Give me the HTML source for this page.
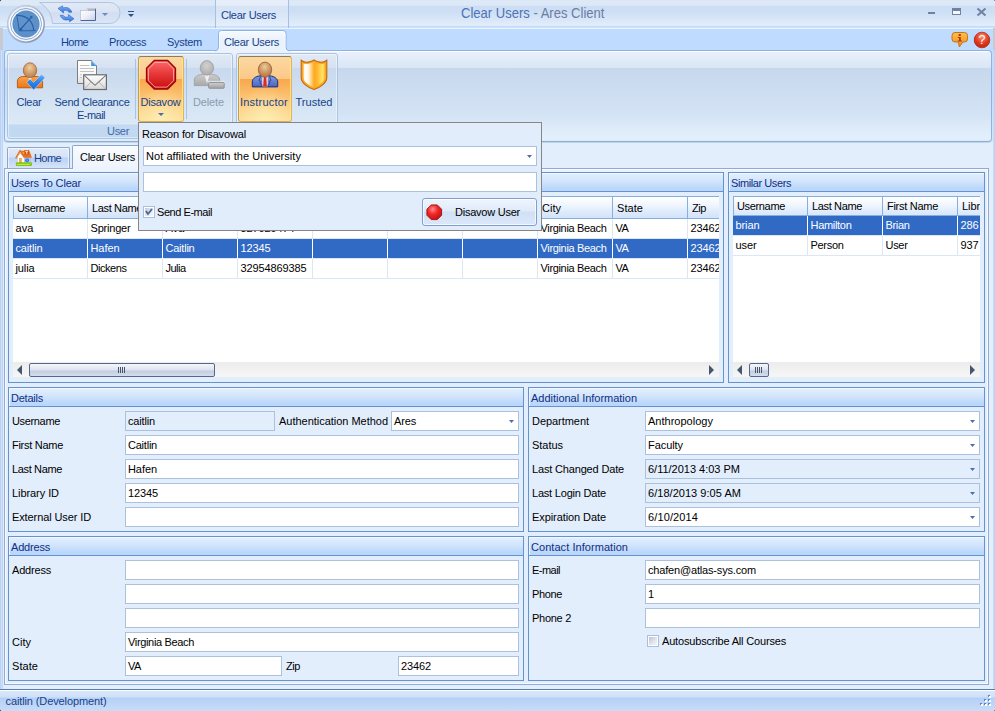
<!DOCTYPE html>
<html><head>
<meta charset="utf-8">
<title>Clear Users - Ares Client</title>
<style>
*{box-sizing:border-box;margin:0;padding:0}
html,body{width:995px;height:711px;overflow:hidden}
body{position:relative;background:#e3eefc;font-family:"Liberation Sans",sans-serif;font-size:11px;letter-spacing:-0.2px;color:#000;line-height:13px}
.a{position:absolute}
.t{position:absolute;white-space:nowrap;height:13px;line-height:13px}
/* title bar */
#title{left:0;top:0;width:995px;height:29px;background:linear-gradient(#dde8f6 0,#dfeaf8 3px,#d9e6f6 6px,#cbddf4 6px,#cedff5 12px,#d9e7f8 20px,#e3eefb 26px,#cfe4fb 26px,#b3d3f8 27px,#b3d3f8 27px,#e9f1fb 28px,#eef3fb 29px)}
#tabrow{left:0;top:29px;width:995px;height:113px;background:linear-gradient(#bfdbff 0,#bfdbff 60px,#d4e5fb 112px)}
#titletext{left:461px;top:5px;font-size:14.600px;letter-spacing:0;color:#6a7da3;height:16px;line-height:16px;transform-origin:0 0;transform:scaleX(.893)}
.rt{color:#15428b;top:36px}
/* ribbon */
#ribbon{left:4px;top:50px;width:988px;height:92px;border:1px solid #8db2e3;border-bottom-color:#93abcf;border-radius:4px;background:linear-gradient(#ffffff 0,#ffffff 1px,#e9f1fb 1px,#d9e6f5 17px,#c7d8ed 17px,#d3e3f4 62px,#e4f0fd 88px,#d3f0fa 89px,#d3f0fa 90px);box-shadow:0 1px 0 rgba(160,178,210,.45)}
.grp{top:53px;height:86px;border:1px solid #abc4e3;border-radius:3px;background:linear-gradient(#e1eaf6 0,#d5e1f1 14px,#c8d9ee 14px,#d5e4f3 50px,#dbe9f7 70px,#c2d9f1 71px,#c1d8f0 84px)}
.grp:after{content:"";position:absolute;left:0;right:0;top:0;bottom:0;border:1px solid rgba(255,255,255,.45);border-radius:2px}
.cap{color:#3e6aaa;top:125px}
.btnlbl{color:#15428b;text-align:center}
.hot{border:1px solid;border-color:#8f7b55 #e3b35a #d6ae60 #c39a57;border-radius:3px;background:radial-gradient(ellipse 30px 34px at 50% 100%,rgba(255,243,185,.75),rgba(255,243,185,0) 100%),linear-gradient(#fad9a3 0,#fbd49a 6px,#fbc987 22px,#f9a74c 22px,#fab661 32px,#fbc87c 44px,#fcd690 56px,#fddd9a 64px);box-shadow:inset 1px 0 0 rgba(255,232,150,.8),inset -1px 0 0 rgba(255,232,150,.8)}
/* popup */
#popup{left:138px;top:122px;width:404px;height:109px;background:#e2edfb;border:1px solid #868686}
.fld{position:absolute;height:20px;border:1px solid #abc1de;background:#fff;padding-left:2px;line-height:19px;white-space:nowrap;overflow:hidden}
.fld.dis{background:#e3eefc}
.arr{position:absolute;right:4px;top:8px;width:5px;height:3px;background:#4d6fa8;clip-path:polygon(0 0,100% 0,50% 100%)}
/* groups */
.gc{position:absolute;border:1px solid #6593cf;background:#e3eefc}
.gh{box-shadow:inset 1px 0 0 #eef5ff;position:absolute;left:0;right:0;top:0;height:19px;border-bottom:1px solid #6593cf;background:linear-gradient(#e1eefd 0,#d3e5fc 7px,#b9d6fb 15px,#bad7fb 18px);color:#0e2f82;padding-left:2px;line-height:18px;white-space:nowrap;border-top:1px solid #f2f8ff}
.lb{position:absolute;white-space:nowrap;line-height:13px;margin-top:1px}
/* grid */
.hd{position:absolute;top:0;height:22px;border-right:1px solid #88aee0;border-bottom:1px solid #88aee0;border-top:1px solid #88aee0;background:linear-gradient(#ffffff 0,#f0f6fe 8px,#dbe9fb 16px,#d2e3f9 21px);padding-left:4px;white-space:nowrap;overflow:hidden}
.row{position:absolute;left:0;height:20px;border-bottom:1px solid #dce7f5}
.row.sel{background:#316ac5;color:#fff}
.c{position:absolute;top:0;height:20px;line-height:19px;padding-left:2.500px;border-right:1px solid #dce7f5;white-space:nowrap;overflow:hidden}
.sel .c{border-right-color:#fff}
.sb{position:absolute;left:0;height:15px;background:linear-gradient(#ececec,#f6f6f6)}
.thumb{position:absolute;top:1px;height:14px;border:1px solid #55678b;border-radius:2px;background:linear-gradient(#f4f7fc 0,#dde4f0 6px,#c3cde0 7px,#d6deec 12px)}
</style>
</head>
<body>
<!-- TITLE BAR -->
<div class="a" id="title"></div>
<div class="a" id="tabrow"></div>
<div class="t" id="titletext"><span style="color:#4d72b3">Clear Users</span> - Ares Client</div>
<!-- window side borders -->
<div class="a" style="left:0;top:28px;width:3px;height:22px;background:#c9cad1"></div>
<div class="a" style="left:993px;top:28px;width:2px;height:22px;background:#c9cad1"></div>
<div class="a" style="left:0;top:50px;width:3px;height:639px;background:linear-gradient(90deg,#aecbf2,#cfe0f8 50%,#b4cff3)"></div>
<div class="a" style="left:993px;top:50px;width:2px;height:639px;background:linear-gradient(90deg,#cfe0f8,#b4cff3)"></div>

<!-- context tab header in title -->
<div class="a" style="left:215px;top:0;width:74px;height:28px;border-left:1px solid #a9bfdf;border-right:1px solid #a9bfdf;background:linear-gradient(rgba(255,255,255,.25),rgba(255,255,255,.1))"></div>
<div class="t" style="left: 221px; top: 9px; color: rgb(21, 66, 139); letter-spacing: -0.28px;">Clear Users</div>

<!-- quick access pill -->
<svg class="a" style="left:38px;top:0" width="86" height="27" viewBox="0 0 86 27">
 <defs><linearGradient id="pg" x1="0" y1="0" x2="0" y2="1"><stop offset="0" stop-color="#e2eaf7"></stop><stop offset=".45" stop-color="#d9e3f3"></stop><stop offset=".5" stop-color="#d1ddf1"></stop><stop offset="1" stop-color="#dbe6f7"></stop></linearGradient></defs>
 <path d="M1.500 2.500 H71.500 A10.500 10.500 0 0 1 71.500 23.500 H14.500 A26 26 0 0 0 1.500 2.500Z" fill="url(#pg)" stroke="#b3c4e2" stroke-width="1"></path>
</svg>
<!-- orb -->
<svg class="a" style="left:6px;top:4px" width="40" height="40" viewBox="0 0 40 40">
 <defs><radialGradient id="og" cx="50%" cy="45%" r="60%"><stop offset="0" stop-color="#6496cc"></stop><stop offset="1" stop-color="#5a8cc6"></stop></radialGradient>
 <linearGradient id="ors" x1="0" y1="0" x2="1" y2="1"><stop offset="0" stop-color="#cfd8e6"></stop><stop offset=".5" stop-color="#a9b6cc"></stop><stop offset="1" stop-color="#76869f"></stop></linearGradient>
 <linearGradient id="orr" x1="0" y1="0" x2="0" y2="1"><stop offset="0" stop-color="#e9eef6"></stop><stop offset=".5" stop-color="#ffffff"></stop><stop offset="1" stop-color="#f2f5fa"></stop></linearGradient></defs>
 <circle cx="20" cy="20.300" r="19" fill="#8fa3c2" opacity=".55"></circle>
 <circle cx="20" cy="20" r="18.100" fill="url(#orr)" stroke="url(#ors)" stroke-width="1.300"></circle>
 <circle cx="20" cy="20" r="15.500" fill="none" stroke="#7fa3d0" stroke-width=".9"></circle>
 <circle cx="20" cy="20" r="13.600" fill="url(#og)"></circle>
 <g stroke="#2560ad" fill="none" stroke-width="1.100" stroke-linecap="round">
  <path d="M10.900 11.100 C20 11.600 26.500 15.500 27.800 26.400"></path>
  <path d="M10.900 11.100 L13.300 26.900 L29.200 26.600" stroke-width=".9"></path>
  <path d="M14.400 25.500 L25.300 13.200" stroke-width="1.200"></path>
  <path d="M24.300 12.800 L26 12.200 L25.800 14.200" stroke-width=".9"></path>
 </g>
 <path d="M13.300 26.900 L14 23.600 L17 26.200Z" fill="#2560ad"></path>
</svg>
<!-- QAT icons -->
<svg class="a" style="left:57px;top:5px" width="18" height="18" viewBox="0 0 18 18">
 <defs><linearGradient id="rf" x1="0" y1="0" x2="0" y2="1"><stop offset="0" stop-color="#7db8f7"></stop><stop offset="1" stop-color="#2d6fd8"></stop></linearGradient></defs>
 <path d="M1 3.500 L5.500 0.800 L5.800 3 C9.500 1.500 13.500 3 14.800 7.200 L11.800 7.200 C10.800 5.200 8.500 4.800 6.300 5.800 L6.700 8Z" fill="url(#rf)" stroke="#2b62c0" stroke-width=".6"></path>
 <path d="M17 13.800 L12.500 16.800 L12.200 14.500 C8.500 16 4.500 14.500 3.200 10.300 L6.200 10.300 C7.200 12.300 9.500 12.700 11.700 11.700 L11.300 9.500Z" fill="url(#rf)" stroke="#2b62c0" stroke-width=".6"></path>
</svg>
<svg class="a" style="left:79px;top:7px" width="18" height="15" viewBox="0 0 18 15">
 <defs><linearGradient id="fg" x1="0" y1="0" x2="1" y2="1"><stop offset="0" stop-color="#ffffff"></stop><stop offset=".5" stop-color="#eef1f9"></stop><stop offset="1" stop-color="#c3cde6"></stop></linearGradient></defs>
 <path d="M1.500 3.500 H8 V1.500 H16.500 V13.500 H1.500Z" fill="url(#fg)"></path>
 <path d="M8.500 1.500 H16.500 V4 H8.500Z" fill="#b4b8c2"></path>
 <path d="M1.500 3.500 V13.500 H16.500 V1.500" fill="none" stroke="#4f6196" stroke-width="1"></path>
 <path d="M1.500 13.500 V3.500 H8 V1.500 H16.500" fill="none" stroke="#c3cbdc" stroke-width="1"></path>
</svg>
<div class="a" style="left:102px;top:13px;width:0;height:0;border-left:3px solid transparent;border-right:3px solid transparent;border-top:3px solid #6c8cc0"></div>
<div class="a" style="left:128px;top:11px;width:6px;height:1px;background:#34507f"></div>
<div class="a" style="left:128px;top:14px;width:0;height:0;border-left:3px solid transparent;border-right:3px solid transparent;border-top:3px solid #34507f"></div>

<!-- window buttons -->
<div class="a" style="left:928px;top:12px;width:7px;height:2px;background:#6f82a3"></div>
<div class="a" style="left:952px;top:8px;width:9px;height:7px;border:1px solid #6f82a3;border-top-width:3px;background:#f4f7fc"></div>
<svg class="a" style="left:976px;top:7px" width="11" height="10" viewBox="0 0 11 10"><path d="M1.500 1.500 L9.500 8.500 M9.500 1.500 L1.500 8.500" stroke="#6f82a3" stroke-width="2"></path></svg>

<!-- ribbon tabs -->
<div class="t rt" style="left: 61px; letter-spacing: -0.586px;">Home</div>
<div class="t rt" style="left: 109px; letter-spacing: -0.393px;">Process</div>
<div class="t rt" style="left: 167px; letter-spacing: -0.281px;">System</div>

<!-- info + help icons -->
<svg class="a" style="left:951px;top:31px" width="18" height="18" viewBox="0 0 18 18">
 <defs><linearGradient id="ig" x1="0" y1="0" x2="0" y2="1"><stop offset="0" stop-color="#fbc14d"></stop><stop offset="1" stop-color="#f08a1c"></stop></linearGradient></defs>
 <path d="M4 1.500 H13.500 Q16.500 1.500 16.500 4.500 V8 Q16.500 11 13.500 11 H12 L8.300 16 L7.300 11 H4 Q1 11 1 8 V4.500 Q1 1.500 4 1.500Z" fill="url(#ig)" stroke="#c8751a" stroke-width="1"></path>
 <rect x="7.600" y="3" width="2.200" height="2" fill="#b03a1a"></rect><path d="M6.800 6 H9.800 V9.500 H11 V10.400 H6.800 V9.500 H8 V6.900 H6.800Z" fill="#b03a1a"></path>
</svg>
<svg class="a" style="left:973px;top:31px" width="18" height="18" viewBox="0 0 18 18">
 <defs><radialGradient id="hg" cx="50%" cy="30%" r="70%"><stop offset="0" stop-color="#f9947a"></stop><stop offset=".6" stop-color="#e03a1e"></stop><stop offset="1" stop-color="#c0250f"></stop></radialGradient></defs>
 <circle cx="9" cy="9" r="7.800" fill="url(#hg)" stroke="#b5270f" stroke-width=".8"></circle>
 <text x="9" y="13.400" font-family="Liberation Sans,sans-serif" font-size="12.500" fill="#fff" text-anchor="middle">?</text>
</svg>

<!-- RIBBON -->
<div class="a" id="ribbon"></div>
<svg class="a" style="left:214px;top:30px" width="76" height="23" viewBox="0 0 76 23">
 <defs><linearGradient id="tg" x1="0" y1="0" x2="0" y2="1"><stop offset="0" stop-color="#f6faff"></stop><stop offset=".5" stop-color="#e9f1fb"></stop><stop offset="1" stop-color="#ebf2fb"></stop></linearGradient></defs>
 <path d="M1 21 Q4 20.500 4.500 17.500 V3.500 Q4.500 .500 7.500 .500 H69 Q72 .500 72 3.500 V17.500 Q72.500 20.500 75.500 21 V22.500 H1Z" fill="url(#tg)"></path>
 <path d="M1 21 Q4 20.500 4.500 17.500 V3.500 Q4.500 .500 7.500 .500 H69 Q72 .500 72 3.500 V17.500 Q72.500 20.500 75.500 21" fill="none" stroke="#8db2e3" stroke-width="1"></path>
 <path d="M5.500 17.500 V4 Q5.500 1.500 8 1.500 H68.500 Q71 1.500 71 4 V17.500" fill="none" stroke="#ffffff" stroke-width="1" opacity=".7"></path>
</svg>
<div class="t rt" style="left: 224px; letter-spacing: -0.28px;">Clear Users</div>
<div class="a grp" style="left:7px;width:226px"></div>
<div class="a grp" style="left:236px;width:102px"></div>
<div class="t cap" style="left: 107px; letter-spacing: -0.309px;">User</div>
<div class="a" style="left:135px;top:59px;width:1px;height:60px;background:#a9c3e4"></div>
<div class="a" style="left:186px;top:59px;width:1px;height:60px;background:#a9c3e4"></div>
<div class="a hot" style="left:138px;top:56px;width:46px;height:66px"></div>
<div class="a hot" style="left:238px;top:56px;width:54px;height:66px"></div>
<div class="t btnlbl" style="left: 9px; width: 40px; top: 96px; letter-spacing: -0.259px;">Clear</div>
<div class="t btnlbl" style="left: 50px; width: 84px; top: 96px; letter-spacing: -0.278px;">Send Clearance</div>
<div class="t btnlbl" style="left: 49px; width: 84px; top: 109px; letter-spacing: -0.529px;">E-mail</div>
<div class="t btnlbl" style="left: 137px; width: 47px; top: 96px; letter-spacing: -0.225px;">Disavow</div>
<div class="a" style="left:158px;top:113px;width:0;height:0;border-left:3px solid transparent;border-right:3px solid transparent;border-top:3px solid #4d6fa8"></div>
<div class="t btnlbl" style="left: 188px; width: 41px; top: 96px; color: rgb(141, 154, 175); letter-spacing: -0.133px;">Delete</div>
<div class="t btnlbl" style="left: 237px; width: 54px; top: 96px; letter-spacing: 0.214px;">Instructor</div>
<div class="t btnlbl" style="left: 292px; width: 44px; top: 96px; letter-spacing: 0.016px;">Trusted</div>
<!--ICONS_START-->
<svg class="a" style="left:13px;top:58px" width="34" height="34" viewBox="0 0 34 34">
 <defs>
  <radialGradient id="hd1" cx="48%" cy="32%" r="70%"><stop offset="0" stop-color="#eed0a0"></stop><stop offset=".6" stop-color="#cf9a66"></stop><stop offset="1" stop-color="#b97a4a"></stop></radialGradient>
  <linearGradient id="bd1" x1="0" y1="0" x2="0" y2="1"><stop offset="0" stop-color="#fba04a"></stop><stop offset="1" stop-color="#ee7614"></stop></linearGradient>
  <linearGradient id="ck1" x1="0" y1="0" x2="0" y2="1"><stop offset="0" stop-color="#6fb4fb"></stop><stop offset=".5" stop-color="#2e86e8"></stop><stop offset="1" stop-color="#1767d2"></stop></linearGradient>
 </defs>
 <path d="M4.400 29.800 V23 C4.400 20.500 6.500 18.800 9.500 18.500 H24.500 C27.500 18.800 29.600 20.500 29.600 23 V29.800Z" fill="url(#bd1)" stroke="#b4570f" stroke-width=".9"></path>
 <path d="M14.800 19 L17 24 L19.200 19Z" fill="#f6efe6"></path>
 <ellipse cx="17" cy="12.300" rx="6.700" ry="7.500" fill="url(#hd1)" stroke="#a3623a" stroke-width=".8"></ellipse>
 <path d="M13.700 24.300 L17 21 L20.600 24.400 L28.500 16.200 L32.100 19.800 L20.600 31.900Z" fill="url(#ck1)" stroke="#dbeafb" stroke-width=".5"></path>
</svg>
<svg class="a" style="left:75px;top:58px" width="34" height="34" viewBox="0 0 34 34">
 <defs><linearGradient id="env" x1="0" y1="0" x2="0" y2="1"><stop offset="0" stop-color="#ffffff"></stop><stop offset="1" stop-color="#d9d9d9"></stop></linearGradient>
 <linearGradient id="doc" x1="0" y1="0" x2="0" y2="1"><stop offset="0" stop-color="#ffffff"></stop><stop offset=".6" stop-color="#f8f8f8"></stop><stop offset="1" stop-color="#dedede"></stop></linearGradient></defs>
 <path d="M2.500 2.500 H16.500 L21.500 7.500 V25.500 H2.500Z" fill="url(#doc)" stroke="#7d7d7d" stroke-width="1"></path>
 <path d="M16.200 2.300 L22 8 H16.200Z" fill="#3f95e4"></path>
 <path d="M16.800 3.200 L20.800 7.200" stroke="#cfe6fb" stroke-width="1"></path>
 <path d="M5 7.500 H14.500 M5 10.500 H19 M5 13.500 H19 M5 16.800 H7 M5 19.600 H7" stroke="#c2c2c2" stroke-width="1"></path>
 <rect x="8.700" y="16.800" width="22.700" height="14.700" fill="url(#env)" stroke="#6a6a6a" stroke-width="1.200"></rect>
 <path d="M9.300 17.400 L20 27.300 L30.800 17.400" stroke="#7a7a7a" stroke-width="1.100" fill="none"></path>
 <path d="M9.500 31 L16 24 M30.500 31 L24 24" stroke="#b5b5b5" stroke-width="1" fill="none"></path>
</svg>
<svg class="a" style="left:145px;top:59px" width="32" height="32" viewBox="0 0 32 32">
 <defs><linearGradient id="sg1" x1="0" y1="0" x2="0" y2="1"><stop offset="0" stop-color="#fb6a6a"></stop><stop offset=".45" stop-color="#e83a3a"></stop><stop offset="1" stop-color="#c80c0c"></stop></linearGradient></defs>
 <path d="M9.300 1.500 H22.700 L30.500 9.300 V22.300 L22.700 30 H9.300 L1.500 22.300 V9.300Z" fill="url(#sg1)" stroke="#9c0505" stroke-width="1.300"></path>
 <path d="M10 3.400 H22 L28.600 10 V21.600 L22 28.100 H10 L3.400 21.600 V10Z" fill="none" stroke="#ffc4c4" stroke-width=".9" opacity=".85"></path>
</svg>
<svg class="a" style="left:192px;top:58px" width="34" height="34" viewBox="0 0 34 34">
 <defs><linearGradient id="gy1" x1="0" y1="0" x2="0" y2="1"><stop offset="0" stop-color="#cdcdcd"></stop><stop offset="1" stop-color="#a8a8a8"></stop></linearGradient>
 <radialGradient id="gy2" cx="48%" cy="35%" r="70%"><stop offset="0" stop-color="#d2d2d2"></stop><stop offset="1" stop-color="#a9a9a9"></stop></radialGradient>
 <linearGradient id="gy3" x1="0" y1="0" x2="0" y2="1"><stop offset="0" stop-color="#d0d0d0"></stop><stop offset="1" stop-color="#a0a0a0"></stop></linearGradient></defs>
 <path d="M2.300 27.600 V22 C2.300 19 5 17 10.500 16.200 H19.500 C25 17 27.700 19 27.700 22 V27.600Z" fill="url(#gy1)" stroke="#9c9c9c" stroke-width=".8"></path>
 <path d="M12.500 17 L15 25.500 L17.500 17Z" fill="#efefef"></path>
 <ellipse cx="14.900" cy="9.900" rx="6.700" ry="7.300" fill="url(#gy2)" stroke="#9e9e9e" stroke-width=".8"></ellipse>
 <rect x="15.800" y="22.800" width="17" height="2" fill="#e4ebf4" opacity=".8"></rect>
 <rect x="16.600" y="24.500" width="15.600" height="5.800" rx=".8" fill="url(#gy3)" stroke="#959595" stroke-width="1"></rect>
</svg>
<svg class="a" style="left:249px;top:58px" width="34" height="34" viewBox="0 0 34 34">
 <defs>
  <radialGradient id="hd2" cx="48%" cy="32%" r="70%"><stop offset="0" stop-color="#e9cc9c"></stop><stop offset=".6" stop-color="#c9915e"></stop><stop offset="1" stop-color="#b07044"></stop></radialGradient>
  <linearGradient id="su" x1="0" y1="0" x2="0" y2="1"><stop offset="0" stop-color="#7d9be0"></stop><stop offset="1" stop-color="#4a66c0"></stop></linearGradient>
 </defs>
 <path d="M3.300 28.900 V24 C3.300 20.500 6.500 18.500 11 17.800 H21 C25.500 18.500 28.700 20.500 28.700 24 V28.900Z" fill="url(#su)" stroke="#17307a" stroke-width="1"></path>
 <path d="M13.400 18 V28.400 H18.600 V18Z" fill="#ffffff"></path>
 <path d="M14.700 19 H17.300 L17.900 28.400 H14.100Z" fill="#e3261e"></path>
 <path d="M11.500 18.500 L10 22.500 L12 23.500 L11 24.500 L13.300 28.300 M20.500 18.500 L22 22.500 L20 23.500 L21 24.500 L18.700 28.300" stroke="#22398a" stroke-width=".8" fill="none"></path>
 <ellipse cx="16" cy="11.700" rx="6.700" ry="7.600" fill="url(#hd2)" stroke="#9a5836" stroke-width=".8"></ellipse>
</svg>
<svg class="a" style="left:299px;top:58px" width="30" height="34" viewBox="0 0 30 34">
 <defs><linearGradient id="sh" x1="0" y1="0" x2="1" y2="0"><stop offset="0" stop-color="#ffc462"></stop><stop offset=".07" stop-color="#ffffff"></stop><stop offset=".2" stop-color="#fffaf0"></stop><stop offset=".32" stop-color="#ffe0ad"></stop><stop offset=".5" stop-color="#ffab1e"></stop><stop offset=".62" stop-color="#ffb22c"></stop><stop offset=".9" stop-color="#ffe566"></stop><stop offset="1" stop-color="#ffc43e"></stop></linearGradient></defs>
 <path d="M2.200 2.200 Q5.500 4.800 9.300 4.100 Q13 3.500 15 2 Q17 3.500 20.700 4.100 Q24.500 4.800 27.800 2.200 V19.500 C27.800 25 21 29.500 15 31.600 C9 29.500 2.200 25 2.200 19.500Z" fill="#ffa61c" stroke="#c26a14" stroke-width="1.100"></path>
 <path d="M4.200 5.400 Q7 6.300 9.800 5.800 Q13 5.200 15 4 Q17 5.200 20.200 5.800 Q23 6.300 25.800 5.400 V19.300 C25.800 23.800 20 27.600 15 29.500 C10 27.600 4.200 23.800 4.200 19.300Z" fill="url(#sh)"></path>
</svg>
<!--ICONS_END-->

<!-- DOC TABS -->
<div class="a" style="left:7px;top:147px;width:63px;height:22px;border:1px solid #8da6cf;border-bottom:none;border-radius:2px 2px 0 0;background:linear-gradient(#e0eaf8 0,#d6e3f6 9px,#bcd3f3 10px,#c9dcf6 16px,#d9e6f9 21px);box-shadow:inset 1px 1px 0 rgba(255,255,255,.6),inset -1px 0 0 rgba(255,255,255,.6)"></div>
<div class="t" style="left: 34px; top: 152px; color: rgb(21, 66, 139); letter-spacing: -0.586px;">Home</div>
<svg class="a" style="left:15px;top:149px" width="18" height="18" viewBox="0 0 18 18">
 <rect x="2.900" y="6" width="6.200" height="8" fill="#ffffff"></rect>
 <path d="M2.900 9 L5.700 4.600 L9 9Z" fill="#ffffff"></path>
 <rect x="8.900" y="8.600" width="7" height="5" fill="#b4c6e6"></rect>
 <path d="M5 1.800 L14.400 1.800 L17 8.700 L8.700 8.700 L5.700 4.400Z" fill="#e8711f"></path>
 <path d="M7 3 L13.500 3 L14.300 5 L8.200 5Z" fill="#f7a552" opacity=".8"></path>
 <path d="M1.200 8.700 L5.100 1.900" stroke="#e2691c" stroke-width="1.700" stroke-linecap="round"></path>
 <path d="M1.700 8.400 L4.900 3" stroke="#fbd9b0" stroke-width=".6" stroke-dasharray="1 1"></path>
 <rect x="9.400" y="1" width="4.600" height="4.400" fill="#d4530f"></rect>
 <path d="M10.300 2.200 H13.200 M11.750 2.200 V4.800" stroke="#fff4e6" stroke-width="1"></path>
 <rect x="4.100" y="9" width="2.600" height="5" fill="#f3952e"></rect>
 <path d="M4.700 10.300 H6.100 M4.700 12 H6.100" stroke="#fbd29a" stroke-width=".6"></path>
 <circle cx="12.100" cy="11.200" r="1.900" fill="#2f6fe8"></circle>
 <path d="M11.400 10.400 L13.100 10.900 L11.800 11.800Z" fill="#e8f1ff"></path>
 <rect x=".900" y="13.300" width="16.100" height="3.700" rx="1" fill="#7fc41c"></rect>
 <path d="M2 15.400 H14.500 L15.500 14.300" stroke="#d8f53a" stroke-width=".9" fill="none"></path>
</svg>
<div class="a" style="left:4px;top:168px;width:985px;height:517px;border:1px solid #93abd2;background:linear-gradient(#eef4fd 0,#e3eefc 6px);box-shadow:inset 0 0 0 1px #f6faff"></div>
<div class="a" style="left:72px;top:145px;width:70px;height:24px;border:1px solid #8da6cf;border-bottom:none;border-radius:2px 2px 0 0;background:linear-gradient(#f9fbff,#f1f6fe 14px,#eef4fd)"></div>
<div class="a" style="left:73px;top:168px;width:68px;height:2px;background:#eef4fd"></div>
<div class="t" style="left: 80px; top: 151px; letter-spacing: -0.28px;">Clear Users</div>

<!-- GROUPS -->
<div class="gc" style="left:8px;top:172px;width:716px;height:211px"><div class="gh" style="letter-spacing: -0.182px;">Users To Clear</div></div>
<div class="gc" style="left:728px;top:172px;width:257px;height:211px"><div class="gh" style="letter-spacing: -0.416px;">Similar Users</div></div>
<div class="gc" style="left:8px;top:387px;width:516px;height:145px"><div class="gh" style="letter-spacing: -0.232px;">Details</div></div>
<div class="gc" style="left:528px;top:387px;width:457px;height:145px"><div class="gh" style="letter-spacing: -0.018px;">Additional Information</div></div>
<div class="gc" style="left:8px;top:536px;width:516px;height:145px"><div class="gh" style="letter-spacing: -0.194px;">Address</div></div>
<div class="gc" style="left:528px;top:536px;width:457px;height:145px"><div class="gh" style="letter-spacing: 0.053px;">Contact Information</div></div>

<!--GRIDS_START-->
<div class="a" style="left:13px;top:196px;width:706px;height:181px;background:#fff;overflow:hidden">
<div class="hd" style="left: 0px; width: 75px; height: 23px; line-height: 22px; border-left: 1px solid rgb(136, 174, 224); padding-left: 3px; letter-spacing: -0.344px;">Username</div>
<div class="hd" style="left: 75px; width: 75px; height: 23px; line-height: 22px; letter-spacing: -0.356px;">Last Name</div>
<div class="hd" style="left: 150px; width: 75px; height: 23px; line-height: 22px; letter-spacing: -0.278px;">First Name</div>
<div class="hd" style="left: 225px; width: 75px; height: 23px; line-height: 22px; letter-spacing: -0.069px;">Library ID</div>
<div class="hd" style="left: 300px; width: 75px; height: 23px; line-height: 22px; letter-spacing: -0.194px;">Address</div>
<div class="hd" style="left: 375px; width: 75px; height: 23px; line-height: 22px; letter-spacing: -0.17px;">Address 2</div>
<div class="hd" style="left: 450px; width: 75px; height: 23px; line-height: 22px; letter-spacing: -0.17px;">Address 3</div>
<div class="hd" style="left: 525px; width: 75px; height: 23px; line-height: 22px; letter-spacing: 0.012px;">City</div>
<div class="hd" style="left: 600px; width: 75px; height: 23px; line-height: 22px; letter-spacing: 0.063px;">State</div>
<div class="hd" style="left: 675px; width: 75px; height: 23px; line-height: 22px; letter-spacing: -0.427px;">Zip</div>
<div class="row" style="top:23px;width:706px"><div class="c" style="left: 0px; width: 75px; letter-spacing: 0.083px;">ava</div><div class="c" style="left: 75px; width: 75px; letter-spacing: -0.197px;">Springer</div><div class="c" style="left: 150px; width: 75px; letter-spacing: 0.078px;">Ava</div><div class="c" style="left: 225px; width: 75px; letter-spacing: -0.118px;">327029474</div><div class="c" style="left:300px;width:75px"></div><div class="c" style="left:375px;width:75px"></div><div class="c" style="left:450px;width:75px"></div><div class="c" style="left: 525px; width: 75px; letter-spacing: -0.338px;">Virginia Beach</div><div class="c" style="left: 600px; width: 75px; letter-spacing: -0.43px;">VA</div><div class="c" style="left: 675px; width: 75px; letter-spacing: -0.119px;">23462</div></div>
<div class="row sel" style="top:43px;width:706px"><div class="c" style="left: 0px; width: 75px; letter-spacing: -0.161px;">caitlin</div><div class="c" style="left: 75px; width: 75px; letter-spacing: -0.072px;">Hafen</div><div class="c" style="left: 150px; width: 75px; letter-spacing: -0.225px;">Caitlin</div><div class="c" style="left: 225px; width: 75px; letter-spacing: -0.119px;">12345</div><div class="c" style="left:300px;width:75px"></div><div class="c" style="left:375px;width:75px"></div><div class="c" style="left:450px;width:75px"></div><div class="c" style="left: 525px; width: 75px; letter-spacing: -0.338px;">Virginia Beach</div><div class="c" style="left: 600px; width: 75px; letter-spacing: -0.43px;">VA</div><div class="c" style="left: 675px; width: 75px; letter-spacing: -0.119px;">23462</div></div>
<div class="row" style="top:63px;width:706px"><div class="c" style="left: 0px; width: 75px; letter-spacing: -0.116px;">julia</div><div class="c" style="left: 75px; width: 75px; letter-spacing: -0.446px;">Dickens</div><div class="c" style="left: 150px; width: 75px; letter-spacing: -0.525px;">Julia</div><div class="c" style="left: 225px; width: 75px; letter-spacing: -0.118px;">32954869385</div><div class="c" style="left:300px;width:75px"></div><div class="c" style="left:375px;width:75px"></div><div class="c" style="left:450px;width:75px"></div><div class="c" style="left: 525px; width: 75px; letter-spacing: -0.338px;">Virginia Beach</div><div class="c" style="left: 600px; width: 75px; letter-spacing: -0.43px;">VA</div><div class="c" style="left: 675px; width: 75px; letter-spacing: -0.119px;">23462</div></div>
<div class="sb" style="top:166px;width:706px"><div class="a" style="left:4px;top:3px;width:0;height:0;border-top:5px solid transparent;border-bottom:5px solid transparent;border-right:5px solid #46556f"></div><div class="a" style="left:696px;top:3px;width:0;height:0;border-top:5px solid transparent;border-bottom:5px solid transparent;border-left:5px solid #46556f"></div><div class="thumb" style="left:16px;width:186px"><div class="a" style="left:88px;top:3px;width:7px;height:6px;background:repeating-linear-gradient(90deg,#46556f 0,#46556f 1px,transparent 1px,transparent 2px)"></div></div></div>
</div>
<div class="a" style="left:733px;top:196px;width:247px;height:181px;background:#fff;overflow:hidden">
<div class="hd" style="left: 0px; width: 75px; height: 20px; line-height: 19px; border-left: 1px solid rgb(136, 174, 224); padding-left: 3px; letter-spacing: -0.344px;">Username</div>
<div class="hd" style="left: 75px; width: 75px; height: 20px; line-height: 19px; letter-spacing: -0.356px;">Last Name</div>
<div class="hd" style="left: 150px; width: 75px; height: 20px; line-height: 19px; letter-spacing: -0.278px;">First Name</div>
<div class="hd" style="left: 225px; width: 75px; height: 20px; line-height: 19px; letter-spacing: -0.069px;">Library ID</div>
<div class="row sel" style="top:20px;width:247px"><div class="c" style="left: 0px; width: 75px; letter-spacing: -0.094px;">brian</div><div class="c" style="left: 75px; width: 75px; letter-spacing: -0.301px;">Hamilton</div><div class="c" style="left: 150px; width: 75px; letter-spacing: -0.338px;">Brian</div><div class="c" style="left: 225px; width: 75px; letter-spacing: -0.12px;">286</div></div>
<div class="row" style="top:40px;width:247px"><div class="c" style="left: 0px; width: 75px; letter-spacing: -0.102px;">user</div><div class="c" style="left: 75px; width: 75px; letter-spacing: -0.31px;">Person</div><div class="c" style="left: 150px; width: 75px; letter-spacing: -0.309px;">User</div><div class="c" style="left: 225px; width: 75px; letter-spacing: -0.12px;">937</div></div>
<div class="sb" style="top:166px;width:247px"><div class="a" style="left:4px;top:3px;width:0;height:0;border-top:5px solid transparent;border-bottom:5px solid transparent;border-right:5px solid #46556f"></div><div class="a" style="left:237px;top:3px;width:0;height:0;border-top:5px solid transparent;border-bottom:5px solid transparent;border-left:5px solid #46556f"></div><div class="thumb" style="left:16px;width:20px"><div class="a" style="left:5px;top:3px;width:7px;height:6px;background:repeating-linear-gradient(90deg,#46556f 0,#46556f 1px,transparent 1px,transparent 2px)"></div></div></div>
</div>
<!--GRIDS_END-->
<!--FIELDS_START-->
<div class="lb" style="left: 12px; top: 414px; letter-spacing: -0.344px;">Username</div>
<div class="lb" style="left: 12px; top: 438px; letter-spacing: -0.278px;">First Name</div>
<div class="lb" style="left: 12px; top: 462px; letter-spacing: -0.356px;">Last Name</div>
<div class="lb" style="left: 12px; top: 486px; letter-spacing: -0.069px;">Library ID</div>
<div class="lb" style="left: 12px; top: 510px; letter-spacing: -0.106px;">External User ID</div>
<div class="fld dis" style="left: 125px; top: 411px; width: 150px; letter-spacing: -0.161px;">caitlin</div>
<div class="lb" style="left: 279px; top: 414px; letter-spacing: -0.022px;">Authentication Method</div>
<div class="fld" style="left: 391px; top: 411px; width: 128px; letter-spacing: -0.156px;">Ares<div class="arr"></div></div>
<div class="fld" style="left: 125px; top: 435px; width: 394px; letter-spacing: -0.225px;">Caitlin</div>
<div class="fld" style="left: 125px; top: 459px; width: 394px; letter-spacing: -0.072px;">Hafen</div>
<div class="fld" style="left: 125px; top: 483px; width: 394px; letter-spacing: -0.119px;">12345</div>
<div class="fld" style="left:125px;top:507px;width:394px"></div>
<div class="lb" style="left: 532px; top: 414px; letter-spacing: -0.048px;">Department</div>
<div class="lb" style="left: 532px; top: 438px; letter-spacing: -0.031px;">Status</div>
<div class="lb" style="left: 532px; top: 462px; letter-spacing: -0.165px;">Last Changed Date</div>
<div class="lb" style="left: 532px; top: 486px; letter-spacing: -0.204px;">Last Login Date</div>
<div class="lb" style="left: 532px; top: 510px; letter-spacing: -0.081px;">Expiration Date</div>
<div class="fld" style="left: 645px; top: 411px; width: 335px; letter-spacing: 0.014px;">Anthropology<div class="arr"></div></div>
<div class="fld" style="left: 645px; top: 435px; width: 335px; letter-spacing: -0.067px;">Faculty<div class="arr"></div></div>
<div class="fld dis" style="left: 645px; top: 459px; width: 335px; letter-spacing: -0.009px;">6/11/2013 4:03 PM<div class="arr"></div></div>
<div class="fld dis" style="left: 645px; top: 483px; width: 335px; letter-spacing: 0.038px;">6/18/2013 9:05 AM<div class="arr"></div></div>
<div class="fld" style="left: 645px; top: 507px; width: 335px; letter-spacing: 0.118px;">6/10/2014<div class="arr"></div></div>
<div class="lb" style="left: 12px; top: 563px; letter-spacing: -0.194px;">Address</div>
<div class="lb" style="left: 12px; top: 635px; letter-spacing: 0.012px;">City</div>
<div class="lb" style="left: 12px; top: 659px; letter-spacing: 0.063px;">State</div>
<div class="lb" style="left: 286px; top: 659px; letter-spacing: -0.427px;">Zip</div>
<div class="fld" style="left:125px;top:560px;width:394px"></div>
<div class="fld" style="left:125px;top:584px;width:394px"></div>
<div class="fld" style="left:125px;top:608px;width:394px"></div>
<div class="fld" style="left: 125px; top: 632px; width: 394px; letter-spacing: -0.338px;">Virginia Beach</div>
<div class="fld" style="left: 125px; top: 656px; width: 157px; letter-spacing: -0.43px;">VA</div>
<div class="fld" style="left: 398px; top: 656px; width: 121px; letter-spacing: -0.119px;">23462</div>
<div class="lb" style="left: 532px; top: 563px; letter-spacing: -0.529px;">E-mail</div>
<div class="lb" style="left: 532px; top: 587px; letter-spacing: -0.362px;">Phone</div>
<div class="lb" style="left: 532px; top: 611px; letter-spacing: -0.283px;">Phone 2</div>
<div class="fld" style="left: 645px; top: 560px; width: 335px; letter-spacing: -0.172px;">chafen@atlas-sys.com</div>
<div class="fld" style="left: 645px; top: 584px; width: 335px; letter-spacing: -0.125px;">1</div>
<div class="fld" style="left:645px;top:608px;width:335px"></div>
<div class="a" style="left:647px;top:635px;width:12px;height:12px;border:1px solid #a9bee0;background:#fdfeff"><div class="a" style="left:1px;top:1px;width:8px;height:8px;background:linear-gradient(135deg,#bcc2cd,#e4e7ec 60%,#f4f5f7)"></div></div>
<div class="lb" style="left: 662px; top: 634px; letter-spacing: -0.176px;">Autosubscribe All Courses</div>
<!--FIELDS_END-->
<!--POPUP_START-->
<div class="a" id="popup"></div>
<div class="lb" style="left: 142px; top: 127px; letter-spacing: -0.15px;">Reason for Disavowal</div>
<div class="fld" style="left: 143px; top: 146px; width: 394px; letter-spacing: 0.051px;">Not affiliated with the University<div class="arr"></div></div>
<div class="fld" style="left:143px;top:172px;width:394px"></div>
<div class="a" style="left:143px;top:206px;width:12px;height:12px;border:1px solid #a9bee0;background:#fdfeff"><div class="a" style="left:1px;top:1px;width:8px;height:8px;background:linear-gradient(135deg,#c4cad4,#e8ebef 60%,#f6f7f9)"></div></div>
<svg class="a" style="left:143px;top:206px" width="12" height="12" viewBox="0 0 12 12"><path d="M3 5 L5 8 L9 3" stroke="#4a6aa5" stroke-width="1.900" fill="none"></path></svg>
<div class="lb" style="left: 157px; top: 205px; letter-spacing: -0.447px;">Send E-mail</div>
<div class="a" style="left:422px;top:198px;width:115px;height:28px;border:1px solid #7f9fd0;border-radius:3px;background:linear-gradient(#eef4fc 0,#e0ebf9 12px,#d0e0f5 13px,#dce8f8 26px);box-shadow:inset 0 0 0 1px rgba(255,255,255,.7)"></div>
<svg class="a" style="left:426px;top:204px" width="16.500" height="16.500" viewBox="0 0 18 18">
 <defs><radialGradient id="sg2" cx="40%" cy="30%" r="75%"><stop offset="0" stop-color="#ff8a8a"></stop><stop offset=".45" stop-color="#ef2a2a"></stop><stop offset="1" stop-color="#c40d0d"></stop></radialGradient></defs>
 <path d="M5.700 1 H12.300 L17 5.700 V12.300 L12.300 17 H5.700 L1 12.300 V5.700Z" fill="url(#sg2)" stroke="#a30f0f" stroke-width="1"></path>
</svg>
<div class="lb" style="left: 455px; top: 205px; letter-spacing: -0.238px;">Disavow User</div>
<!--POPUP_END-->

<!-- STATUS BAR -->
<div class="a" style="left:0;top:689px;width:995px;height:22px;border-top:1px solid #567db1;background:linear-gradient(#ffffff 0,#ffffff 1px,#d9e7fa 1px,#cfe0f8 7px,#b4d0f5 8px,#c9dcf7 21px)"></div>
<div class="t" style="left: 5.5px; top: 695px; color: rgb(21, 66, 139); letter-spacing: -0.111px;">caitlin (Development)</div>
<svg class="a" style="left:979px;top:694px" width="13" height="13" viewBox="0 0 13 13">
 <g fill="#5b86c7"><rect x="9" y="1" width="2" height="2"></rect><rect x="5" y="5" width="2" height="2"></rect><rect x="9" y="5" width="2" height="2"></rect><rect x="1" y="9" width="2" height="2"></rect><rect x="5" y="9" width="2" height="2"></rect><rect x="9" y="9" width="2" height="2"></rect></g>
 <g fill="#fff"><rect x="10" y="2" width="2" height="2"></rect><rect x="6" y="6" width="2" height="2"></rect><rect x="10" y="6" width="2" height="2"></rect><rect x="2" y="10" width="2" height="2"></rect><rect x="6" y="10" width="2" height="2"></rect><rect x="10" y="10" width="2" height="2"></rect></g>
</svg>
<svg class="a" style="left:0;top:0" width="995" height="711" viewBox="0 0 995 711" pointer-events="none">
 <path d="M0 0 H1.300 L0 1.600Z M995 0 H994 L995 1Z M0 711 V709.600 L1.200 711Z M995 711 V710 L994 711Z" fill="#26334d"></path>
</svg>


</body></html>
